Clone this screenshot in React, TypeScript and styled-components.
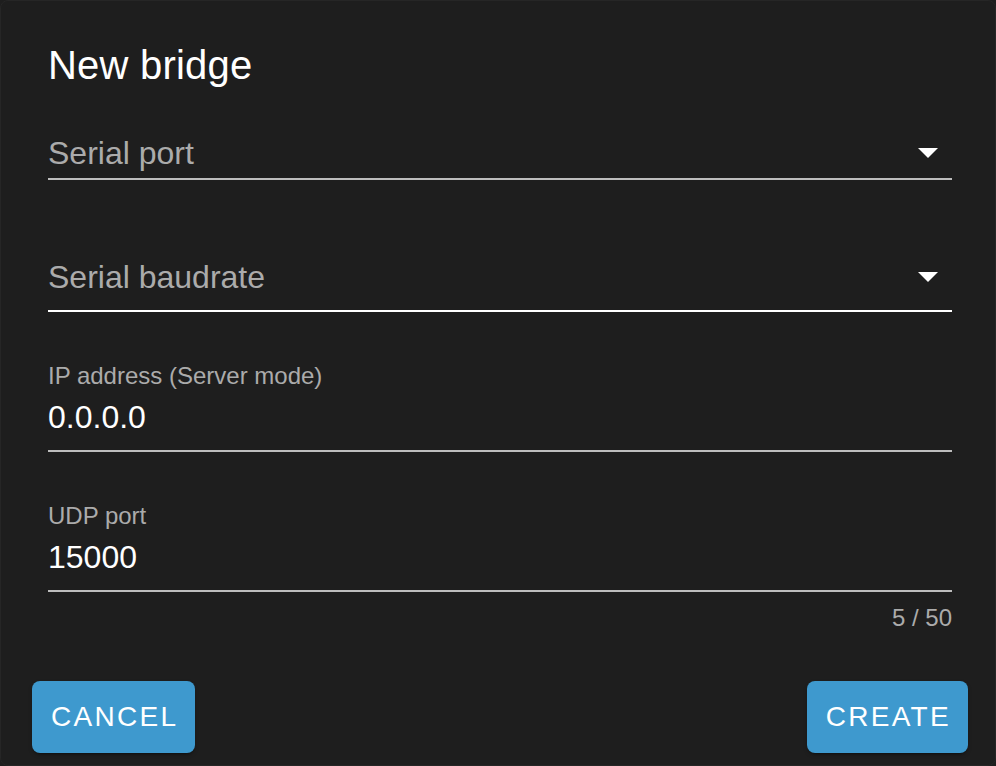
import React from 'react';
import styled, { createGlobalStyle } from 'styled-components';

const GlobalStyle = createGlobalStyle`
  html, body {
    margin: 0;
    padding: 0;
    background: #1e1e1e;
  }
  body {
    font-family: "Liberation Sans", Arial, sans-serif;
  }
`;

const Card = styled.div`
  box-sizing: border-box;
  width: 996px;
  height: 766px;
  background: #1e1e1e;
  border: 1px solid #262626;
  border-radius: 8px;
  display: flex;
  flex-direction: column;
  overflow: hidden;
`;

const Title = styled.h1`
  margin: 0;
  padding: 32px 47px 0;
  font-size: 40px;
  font-weight: 400;
  line-height: 64px;
  letter-spacing: 0.2px;
  color: #ffffff;
`;

const Form = styled.div`
  padding: 0 43px 0 47px;
  display: flex;
  flex-direction: column;
`;

interface SelectRowProps {
  $active?: boolean;
  $shift: number;
  $gap: number;
}

const SelectRow = styled.div<SelectRowProps>`
  margin-top: ${p => p.$gap}px;
  box-sizing: border-box;
  height: 52px;
  padding-bottom: ${p => p.$shift}px;
  display: flex;
  align-items: center;
  border-bottom: 2px solid ${p => (p.$active ? '#ffffff' : '#bdbdbd')};
`;

const Placeholder = styled.span`
  flex: 1;
  font-size: 32px;
  line-height: 40px;
  color: #ababab;
`;

const Caret = styled.svg`
  width: 20px;
  height: 10px;
  margin-right: 14px;
  fill: #ffffff;
`;

const TextField = styled.div<{ $gap: number }>`
  margin-top: ${p => p.$gap}px;
  display: flex;
  flex-direction: column;
`;

const Label = styled.label`
  font-size: 24px;
  line-height: 32px;
  color: #ababab;
`;

const Value = styled.div`
  margin-top: 5px;
  padding-bottom: 13px;
  font-size: 32px;
  line-height: 40px;
  color: #ffffff;
  border-bottom: 2px solid #bdbdbd;
`;

const Counter = styled.div`
  margin-top: 10px;
  text-align: right;
  font-size: 24px;
  line-height: 32px;
  color: #ababab;
`;

const Actions = styled.div`
  margin-top: 47px;
  padding: 0 27px 0 31px;
  display: flex;
  justify-content: space-between;
`;

const Button = styled.button`
  box-sizing: border-box;
  height: 72px;
  padding: 0 17px 0 19px;
  border: none;
  border-radius: 8px;
  background: #3e99ce;
  color: #ffffff;
  font-family: "Liberation Sans", Arial, sans-serif;
  font-size: 28px;
  letter-spacing: 2.3px;
  text-transform: uppercase;
  box-shadow: 0 3px 2px -2px rgba(0, 0, 0, 0.3), 0 2px 4px rgba(0, 0, 0, 0.2);
  cursor: pointer;
`;

const Select: React.FC<{ label: string; active?: boolean; shift: number; gap: number }> = ({
  label,
  active,
  shift,
  gap,
}) => (
  <SelectRow $active={active} $shift={shift} $gap={gap}>
    <Placeholder>{label}</Placeholder>
    <Caret viewBox="0 0 20 10">
      <polygon points="0,0 20,0 10,10" />
    </Caret>
  </SelectRow>
);

const App: React.FC = () => (
  <>
    <GlobalStyle />
    <Card>
      <Title>New bridge</Title>
      <Form>
        <Select label="Serial port" shift={0} gap={31} />
        <Select label="Serial baudrate" active shift={16} gap={80} />
        <TextField $gap={48}>
          <Label>IP address (Server mode)</Label>
          <Value>0.0.0.0</Value>
        </TextField>
        <TextField $gap={48}>
          <Label>UDP port</Label>
          <Value>15000</Value>
          <Counter>5 / 50</Counter>
        </TextField>
      </Form>
      <Actions>
        <Button>Cancel</Button>
        <Button>Create</Button>
      </Actions>
    </Card>
  </>
);

export default App;
